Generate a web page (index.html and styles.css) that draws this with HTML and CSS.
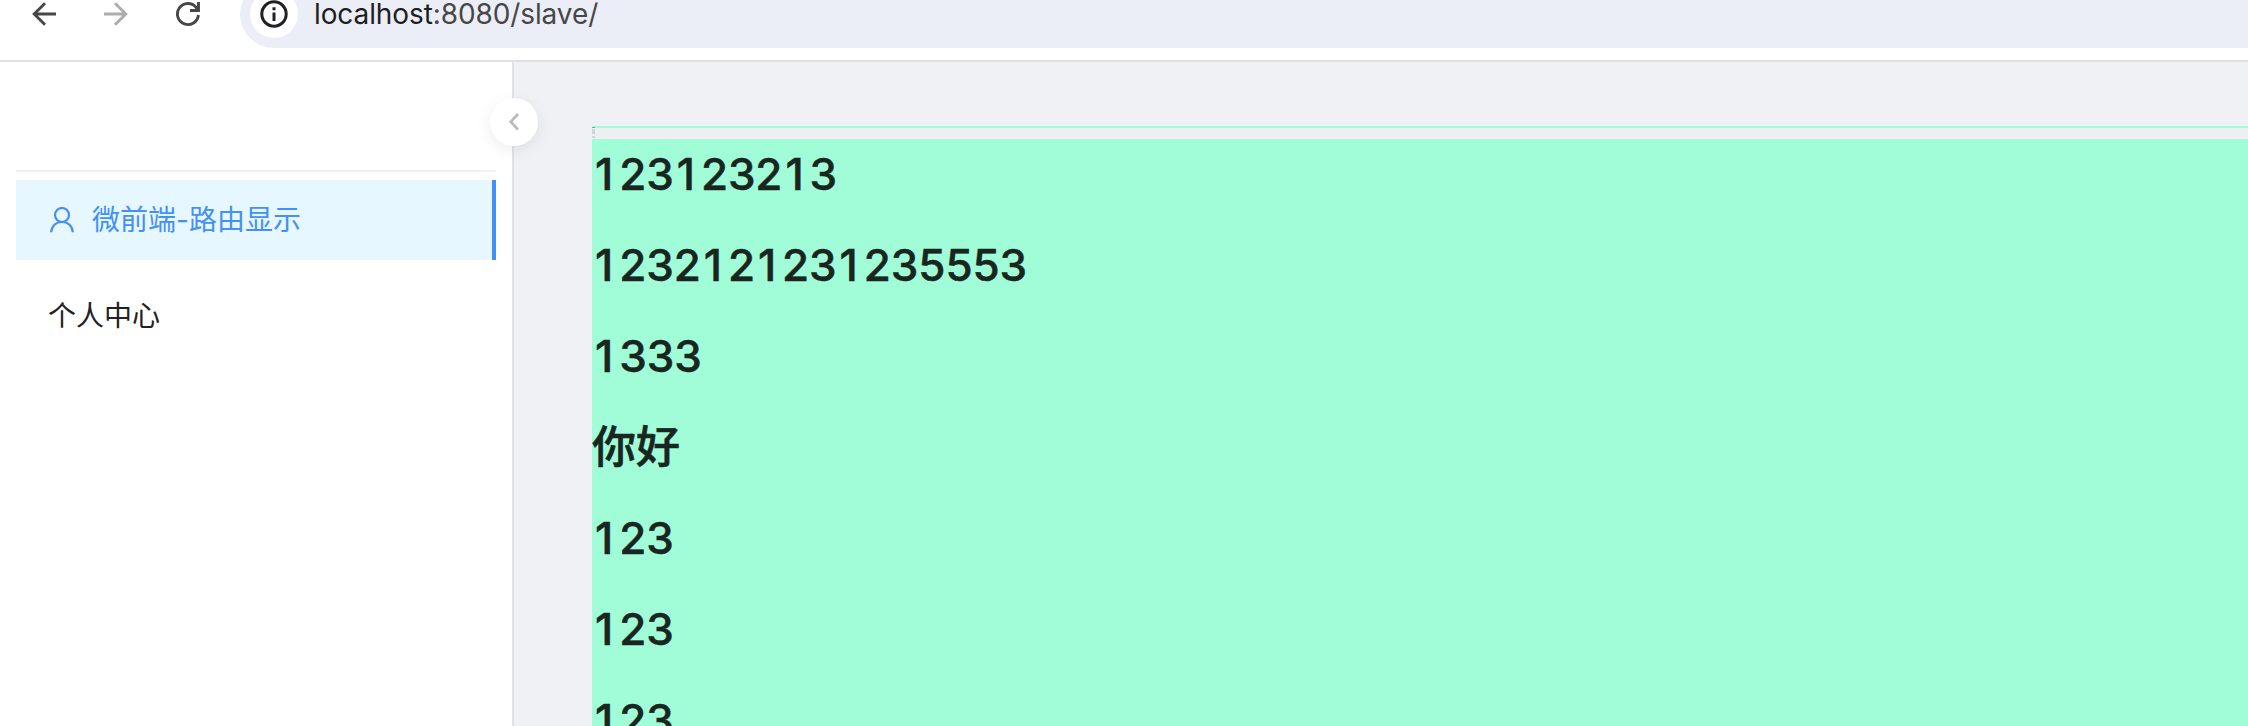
FILE: index.html
```html
<!DOCTYPE html>
<html lang="zh-CN">
<head>
<meta charset="utf-8">
<title>slave</title>
<link rel="stylesheet" href="styles.css">
</head>
<body>
<header class="toolbar">
  <svg class="nav-icon" viewBox="0 0 24 24"><path d="M24 12H2M13 1.200 2.200 12 13 22.800"/></svg>
  <svg class="nav-icon nav-icon-off" viewBox="0 0 24 24"><path d="M0 12h22M11 1.200 21.800 12 11 22.800"/></svg>
  <svg class="nav-icon" viewBox="0 0 24 24"><path d="M22.400 13A10.500 10.500 0 1 1 20 5.300L22 8"/><path d="M22.500 0v8.500H14"/></svg>
  <div class="address">
    <span class="info"><svg viewBox="0 0 28 28"><circle cx="14" cy="14" r="12.200"/><path d="M14 12.500v8.500M14 7.200v3"/></svg></span>
    <span class="url"><span class="host">localhost</span>:8080/slave/</span>
  </div>
</header>
<div class="layout">
  <aside class="sidebar">
    <button class="collapse" aria-label="collapse"><svg viewBox="0 0 10 18"><path d="M9 1 1.800 8.800 9 16.600"/></svg></button>
    <nav class="menu">
      <a class="item item-active"><svg class="user" viewBox="0 0 24 26"><circle cx="12" cy="8" r="7"/><path d="M1.200 25.300C1.500 19 6 15 12 15s10.500 4 10.800 10.300"/></svg><span>微前端-路由显示</span></a>
      <a class="item">个人中心</a>
    </nav>
  </aside>
  <main class="content">
    <div class="app">
      <div class="strip"><i class="thumb"></i></div>
      <h1><i>1</i>23<i>1</i>232<i>1</i>3</h1>
      <h1><i>1</i>232<i>1</i>2<i>1</i>23<i>1</i>235553</h1>
      <h1><i>1</i>333</h1>
      <h1 class="cjk">你好</h1>
      <h1><i>1</i>23</h1>
      <h1><i>1</i>23</h1>
      <h1><i>1</i>23</h1>
    </div>
  </main>
</div>
</body>
</html>
```
FILE: styles.css
```css
* { box-sizing: border-box; }
html { overflow: hidden; }
body {
  margin: 0;
  height: 726px;
  overflow: hidden;
  display: flex;
  flex-direction: column;
  background: #fff;
  font-family: Inter, "Noto Sans CJK SC", sans-serif;
}
svg { fill: none; display: block; }
.toolbar {
  height: 62px;
  flex: none;
  display: flex;
  align-items: flex-start;
  padding-left: 32px;
  border-bottom: 2px solid #e1e1e1;
}
.nav-icon {
  width: 24px;
  height: 24px;
  margin: 2px 48px 0 0;
  flex: none;
  overflow: visible;
  stroke: #474747;
  stroke-width: 2.900;
}
.nav-icon-off { stroke: #acacac; }
.address {
  flex: 1;
  height: 68px;
  margin: -20px 0 0 -8px;
  padding-left: 10px;
  display: flex;
  align-items: center;
  background: #ebeef7;
  border-radius: 34px 0 0 34px;
}
.info {
  width: 48px;
  height: 48px;
  flex: none;
  display: flex;
  align-items: center;
  justify-content: center;
  background: #fff;
  border-radius: 50%;
}
.info svg { width: 28px; height: 28px; stroke: #202124; stroke-width: 3; }
.url {
  margin-left: 16px;
  font-size: 28px;
  line-height: 36px;
  letter-spacing: -.1px;
  color: #474747;
}
.host { color: #1f1f1f; }
.layout { flex: 1; display: flex; min-height: 0; }
.sidebar {
  position: relative;
  width: 514px;
  flex: none;
  padding: 108px 16px 0;
  border-right: 2px solid #e0e2e7;
}
.collapse {
  position: absolute;
  top: 36px;
  right: -26px;
  width: 48px;
  height: 48px;
  padding: 0;
  border: 0;
  border-radius: 50%;
  background: #fff;
  box-shadow: 0 4px 16px rgba(0, 0, 0, .08);
  display: flex;
  align-items: center;
  justify-content: center;
}
.collapse svg { width: 10px; height: 18px; stroke: #bcbcbc; stroke-width: 2.800; overflow: visible; }
.menu {
  display: flex;
  flex-direction: column;
  gap: 16px;
  padding-top: 8px;
  border-top: 2px solid #f0f0f0;
}
.item {
  height: 80px;
  display: flex;
  align-items: center;
  padding: 0 0 4px 32px;
  font-size: 28px;
  color: #222;
}
.item-active {
  background: #e6f7ff;
  color: #4390f8;
  border-right: 4px solid #4390f8;
}
.user { width: 24px; height: 26px; margin: 4px 18px 0 2px; stroke: #4390f8; stroke-width: 2.200; }
.content { flex: 1; min-width: 0; padding: 64px 0 0 78px; background: #f0f1f5; overflow: hidden; }
.app { height: 600px; overflow: hidden; background: #a0fdd8; }
.strip { height: 13px; background: linear-gradient(#a0fdd8 2px, #efefef 2px); }
.thumb {
  display: block;
  width: 3px;
  height: 12px;
  background: linear-gradient(transparent 1px, #6fae97 1px 2px, transparent 2px 3px, #d9dcd0 3px 4px, #c9d6e0 4px 8px, transparent 8px 10px, #c9d6e0 10px);
}
h1 {
  margin: 0;
  height: 91px;
  line-height: 70px;
  font-size: 44px;
  font-weight: 500;
  letter-spacing: -.100px;
  -webkit-text-stroke: .500px #18261f;
  color: #18261f;
}
h1 i {
  display: inline-block;
  width: 27.200px;
  line-height: inherit;
  font-style: normal;
  text-align: center;
  text-indent: -3px;
}
.cjk {
  line-height: 64px;
  font-family: "Noto Sans CJK SC", sans-serif;
  -webkit-text-stroke: .600px #18261f;
  letter-spacing: 0;
}
```
